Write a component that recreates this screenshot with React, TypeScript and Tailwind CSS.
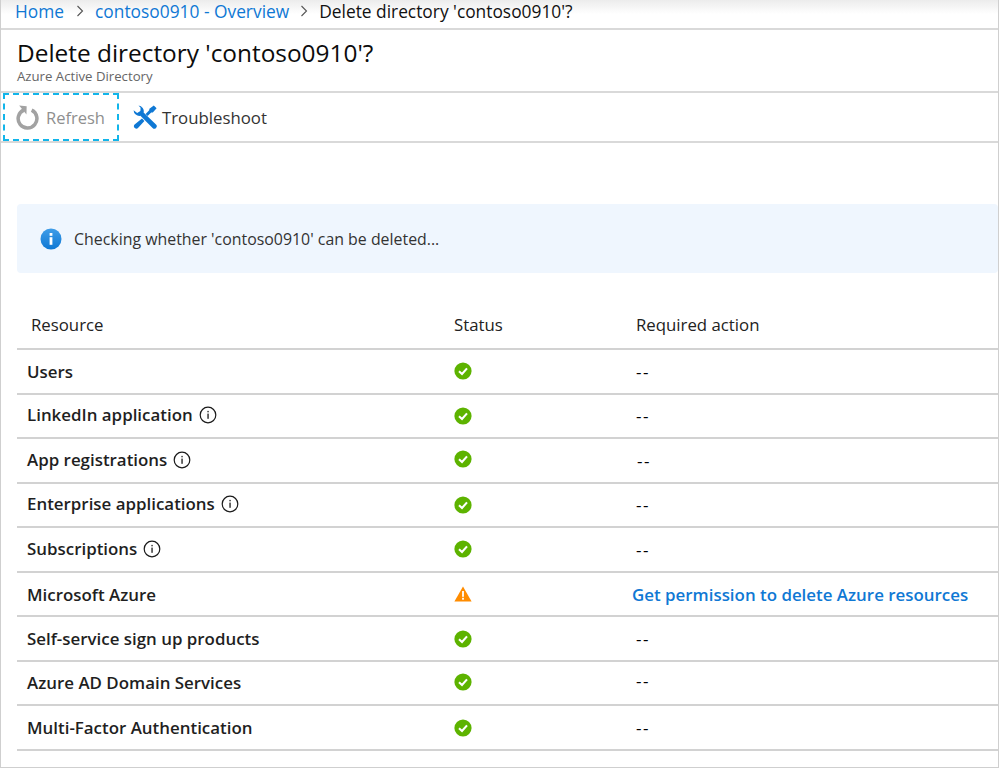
import React from 'react'

const font = "font-['Open_Sans','Noto_Sans',sans-serif]"

function InfoOutline() {
  return (
    <svg width="18" height="18" viewBox="0 0 18 18" className="shrink-0">
      <circle cx="9" cy="9" r="7.8" fill="none" stroke="#1a1a1a" strokeWidth="1.2" />
      <rect x="8.4" y="7.6" width="1.3" height="5.2" fill="#1a1a1a" />
      <rect x="8.4" y="4.9" width="1.3" height="1.4" fill="#1a1a1a" />
    </svg>
  )
}

function CheckIcon() {
  return (
    <svg width="18" height="18" viewBox="0 0 18 18">
      <circle cx="9" cy="9" r="8.6" fill="#5db300" />
      <path d="M5 9.3 L8 12 L13 6.4" fill="none" stroke="#fff" strokeWidth="2.1" />
    </svg>
  )
}

function WarnIcon() {
  return (
    <svg width="18" height="16" viewBox="0 0 18 16">
      <path d="M9 0.5 L17.6 15.5 L0.4 15.5 Z" fill="#ff8c00" />
      <rect x="8.1" y="5" width="1.8" height="5.8" fill="#fff" />
      <rect x="8.1" y="11.8" width="1.8" height="1.9" fill="#fff" />
    </svg>
  )
}

const rows = [
  { name: 'Users', info: false, icon: 'mt-[-1px]', text: 'mb-0', dash: '' },
  { name: 'LinkedIn application', info: true, icon: '', text: 'mb-[3px]', dash: 'mb-[1px]' },
  { name: 'App registrations', info: true, icon: 'mt-[-2px]', text: 'mb-[2px]', dash: 'ml-px' },
  { name: 'Enterprise applications', info: true, icon: '', text: 'mb-[3px]', dash: 'mb-[1px]' },
  { name: 'Subscriptions', info: true, icon: '', text: 'mb-[2px]', dash: '' },
  { name: 'Microsoft Azure', info: false, warn: true, icon: 'mt-[1px]', text: 'mb-0', dash: '' },
  { name: 'Self-service sign up products', info: false, icon: 'mt-[2px]', text: 'mb-0', dash: '' },
  { name: 'Azure AD Domain Services', info: false, icon: 'mt-[-1px]', text: 'mb-[2px]', dash: 'mb-[5px]' },
  { name: 'Multi-Factor Authentication', info: false, icon: 'mt-[2px]', text: 'mb-0', dash: '' },
]

export default function App() {
  return (
    <div className={`${font} w-[999px] h-[768px] bg-white border-l border-r border-b border-[#cfcfcf] overflow-hidden text-[#1a1a1a]`}>
      <div className="h-[30px] flex items-center pl-[14px] pb-[7px] border-b-2 border-[#d9d9d9] bg-gradient-to-b from-[#ececec] via-white to-white text-[17.35px]">
        <span className="text-[#0f78d4]">Home</span>
        <svg width="8" height="12" viewBox="0 0 8 12" className="mx-[12px]"><path d="M1.5 1 L6.5 6 L1.5 11" fill="none" stroke="#555" strokeWidth="1.1" /></svg>
        <span className="text-[#0f78d4] ml-[-1px]">contoso0910 - Overview</span>
        <svg width="8" height="12" viewBox="0 0 8 12" className="mx-[11px]"><path d="M1.5 1 L6.5 6 L1.5 11" fill="none" stroke="#555" strokeWidth="1.1" /></svg>
        <span className="text-[#111]">Delete directory 'contoso0910'?</span>
      </div>

      <div className="h-[63px] pl-[16px] border-b-2 border-[#d9d9d9]">
        <h1 className="text-[24.4px] leading-[30px] pt-[8px] h-[38px] text-[#0c0c0c] font-normal">Delete directory 'contoso0910'?</h1>
        <div className="text-[13.2px] leading-[16px] text-[#666]">Azure Active Directory</div>
      </div>

      <div className="h-[50px] flex items-center border-b-2 border-[#d9d9d9] pl-[2px]">
        <div className="h-[48px] w-[116px] flex items-center border-2 border-dashed border-[#12b5ea] pl-[11px]">
          <svg width="23" height="25" viewBox="0 0 22 24">
            <path d="M7.5 4.8 A9 9 0 1 0 15 5" fill="none" stroke="#a2a2a2" strokeWidth="3.4" />
            <path d="M3 0.5 L10.2 1.2 L10 9 Z" fill="#a2a2a2" />
          </svg>
          <span className="ml-[7px] mt-[2px] text-[16.5px] text-[#8f8f8f]">Refresh</span>
        </div>
        <svg width="24" height="24" viewBox="0 0 24 24" className="ml-[14px]">
          <path d="M5.5 0.6 A5.6 5.6 0 0 1 10.6 7.6 L23 19.6 A2.4 2.4 0 0 1 19.6 23 L7.4 10.8 A5.8 5.8 0 0 1 0.6 5.2 L4.2 8 L7.4 6 L7.6 2.8 Z" fill="#0f78d4" />
          <path d="M20.8 0.4 L23.6 3.2 L19.8 7.4 L18.2 7.4 L14.6 11 L12.6 9 L16.2 5.2 L16.4 3.8 Z" fill="#0f78d4" />
          <path d="M9 13.6 L11.4 16 L5.2 22.8 A2.2 2.2 0 0 1 1.6 19.6 Z" fill="#0f78d4" />
        </svg>
        <span className="ml-[5px] mt-[2px] text-[16.8px] text-[#333]">Troubleshoot</span>
      </div>

      <div className="mt-[61px] ml-[16px] h-[69px] flex items-center pl-[23px] bg-[#eff6fe] rounded-sm">
        <svg width="22" height="22" viewBox="0 0 22 22">
          <defs>
            <linearGradient id="infoFill" x1="0" y1="0" x2="0" y2="1">
              <stop offset="0" stopColor="#3f9de8" />
              <stop offset="1" stopColor="#0f78d4" />
            </linearGradient>
          </defs>
          <circle cx="11" cy="11" r="10.5" fill="url(#infoFill)" />
          <rect x="9.6" y="9.2" width="2.8" height="7.6" fill="#fff" />
          <rect x="9.6" y="5" width="2.8" height="2.8" fill="#fff" />
        </svg>
        <span className="ml-[12px] mt-[2px] text-[15.9px] text-[#333]">Checking whether 'contoso0910' can be deleted...</span>
      </div>

      <div className="ml-[16px] mt-[30px]">
        <div className="h-[47px] grid grid-cols-[437px_182px_1fr] items-center border-b-2 border-[#d2d2d2] pb-[2px] text-[16.8px] text-[#222]">
          <span className="pl-[14px]">Resource</span>
          <span>Status</span>
          <span>Required action</span>
        </div>
        {rows.map(r => (
          <div key={r.name} className="h-[44.5px] grid grid-cols-[437px_182px_1fr] items-center border-b-2 border-[#d2d2d2]">
            <div className={`pl-[10px] pt-[1px] flex items-center gap-[6px] text-[16.9px] font-semibold text-[#1f1f1f] ${r.text}`}>
              <span>{r.name}</span>
              {r.info && <InfoOutline />}
            </div>
            <div className={`flex ${r.icon}`}>{r.warn ? <WarnIcon /> : <CheckIcon />}</div>
            {r.warn
              ? <span className="ml-[-4px] pt-[1px] whitespace-nowrap text-[16.9px] font-semibold text-[#0f78d4]">Get permission to delete Azure resources</span>
              : <span className={`pt-[1px] text-[17px] tracking-[1.5px] text-black ${r.dash}`}>--</span>}
          </div>
        ))}
      </div>
    </div>
  )
}
